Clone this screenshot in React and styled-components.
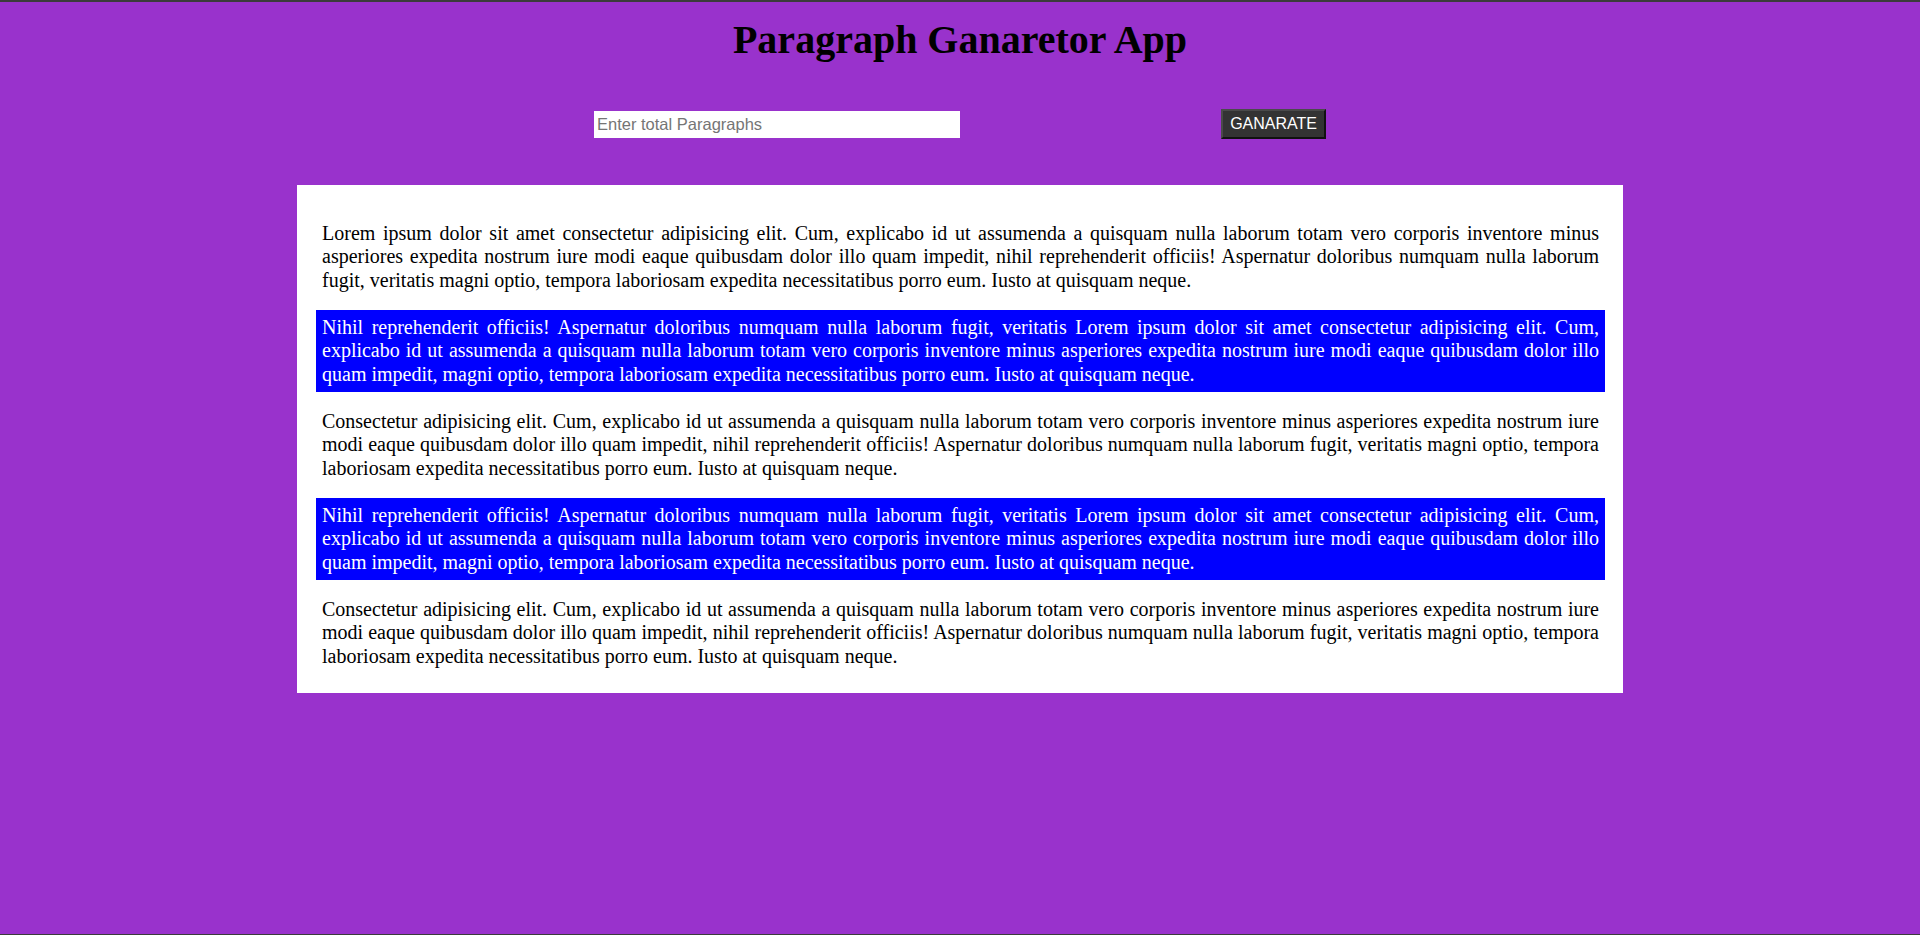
import React, { useState } from "react";
import styled, { createGlobalStyle } from "styled-components";

const GlobalStyle = createGlobalStyle`
  html, body {
    margin: 0;
    padding: 0;
  }
  body {
    font-family: "Liberation Serif", "Times New Roman", serif;
    background: #9932cc;
  }
`;

const LOREM =
  "Lorem ipsum dolor sit amet consectetur adipisicing elit. Cum, explicabo id ut assumenda a quisquam nulla laborum totam vero corporis inventore minus asperiores expedita nostrum iure modi eaque quibusdam dolor illo quam impedit, nihil reprehenderit officiis! Aspernatur doloribus numquam nulla laborum fugit, veritatis magni optio, tempora laboriosam expedita necessitatibus porro eum. Iusto at quisquam neque.";
const NIHIL =
  "Nihil reprehenderit officiis! Aspernatur doloribus numquam nulla laborum fugit, veritatis Lorem ipsum dolor sit amet consectetur adipisicing elit. Cum, explicabo id ut assumenda a quisquam nulla laborum totam vero corporis inventore minus asperiores expedita nostrum iure modi eaque quibusdam dolor illo quam impedit, magni optio, tempora laboriosam expedita necessitatibus porro eum. Iusto at quisquam neque.";
const CONSECTETUR =
  "Consectetur adipisicing elit. Cum, explicabo id ut assumenda a quisquam nulla laborum totam vero corporis inventore minus asperiores expedita nostrum iure modi eaque quibusdam dolor illo quam impedit, nihil reprehenderit officiis! Aspernatur doloribus numquam nulla laborum fugit, veritatis magni optio, tempora laboriosam expedita necessitatibus porro eum. Iusto at quisquam neque.";

const textFor = i => {
  if (i === 0) return LOREM;
  return i % 2 === 1 ? NIHIL : CONSECTETUR;
};

const Page = styled.div`
  min-height: 100vh;
  box-sizing: border-box;
  background: #9932cc;
  border-top: 2px solid #3b3b3b;
  border-bottom: 1px solid #3b3b3b;
  overflow: hidden;
`;

const Title = styled.h1`
  margin: 14px 0 0;
  font-size: 40px;
  font-weight: bold;
  text-align: center;
  color: #000;
`;

const Form = styled.form`
  width: 732px;
  margin: 46px auto 0;
  display: flex;
  align-items: center;
  justify-content: space-between;
`;

const CountInput = styled.input`
  width: 366px;
  height: 27px;
  box-sizing: border-box;
  border: none;
  outline: none;
  padding: 0 3px;
  font-family: "Liberation Sans", Arial, sans-serif;
  font-size: 16.5px;
  background: #fff;

  &::placeholder {
    color: #757575;
  }
`;

const GenerateButton = styled.button`
  box-sizing: border-box;
  height: 30px;
  padding: 0 7px;
  background: #333;
  color: #fff;
  border: 2px solid;
  border-color: #4a4a4a #111 #111 #4a4a4a;
  font-family: "Liberation Sans", Arial, sans-serif;
  font-size: 16px;
  cursor: pointer;
`;

const Output = styled.section`
  width: 1326px;
  box-sizing: border-box;
  margin: 46px auto 0;
  padding: 31px 18px 19px 19px;
  background: #fff;
  display: flex;
  flex-direction: column;
  gap: 12px;
`;

const Para = styled.p`
  margin: 0;
  padding: 6px;
  font-size: 20px;
  line-height: 23.33px;
  text-align: justify;
  color: ${props => (props.highlight ? "#fff" : "#000")};
  background: ${props => (props.highlight ? "#0000ff" : "transparent")};
`;

const App = () => {
  const [value, setValue] = useState("");
  const [count, setCount] = useState(5);

  const generate = e => {
    e.preventDefault();
    const n = parseInt(value, 10);
    if (n > 0) setCount(n);
  };

  return (
    <>
      <GlobalStyle />
      <Page>
        <Title>Paragraph Ganaretor App</Title>
        <Form onSubmit={generate}>
          <CountInput
            type="number"
            placeholder="Enter total Paragraphs"
            value={value}
            onChange={e => setValue(e.target.value)}
          />
          <GenerateButton type="submit">GANARATE</GenerateButton>
        </Form>
        <Output>
          {Array.from({ length: count }, (_, i) => (
            <Para key={i} highlight={i % 2 === 1}>
              {textFor(i)}
            </Para>
          ))}
        </Output>
      </Page>
    </>
  );
};

export default App;
